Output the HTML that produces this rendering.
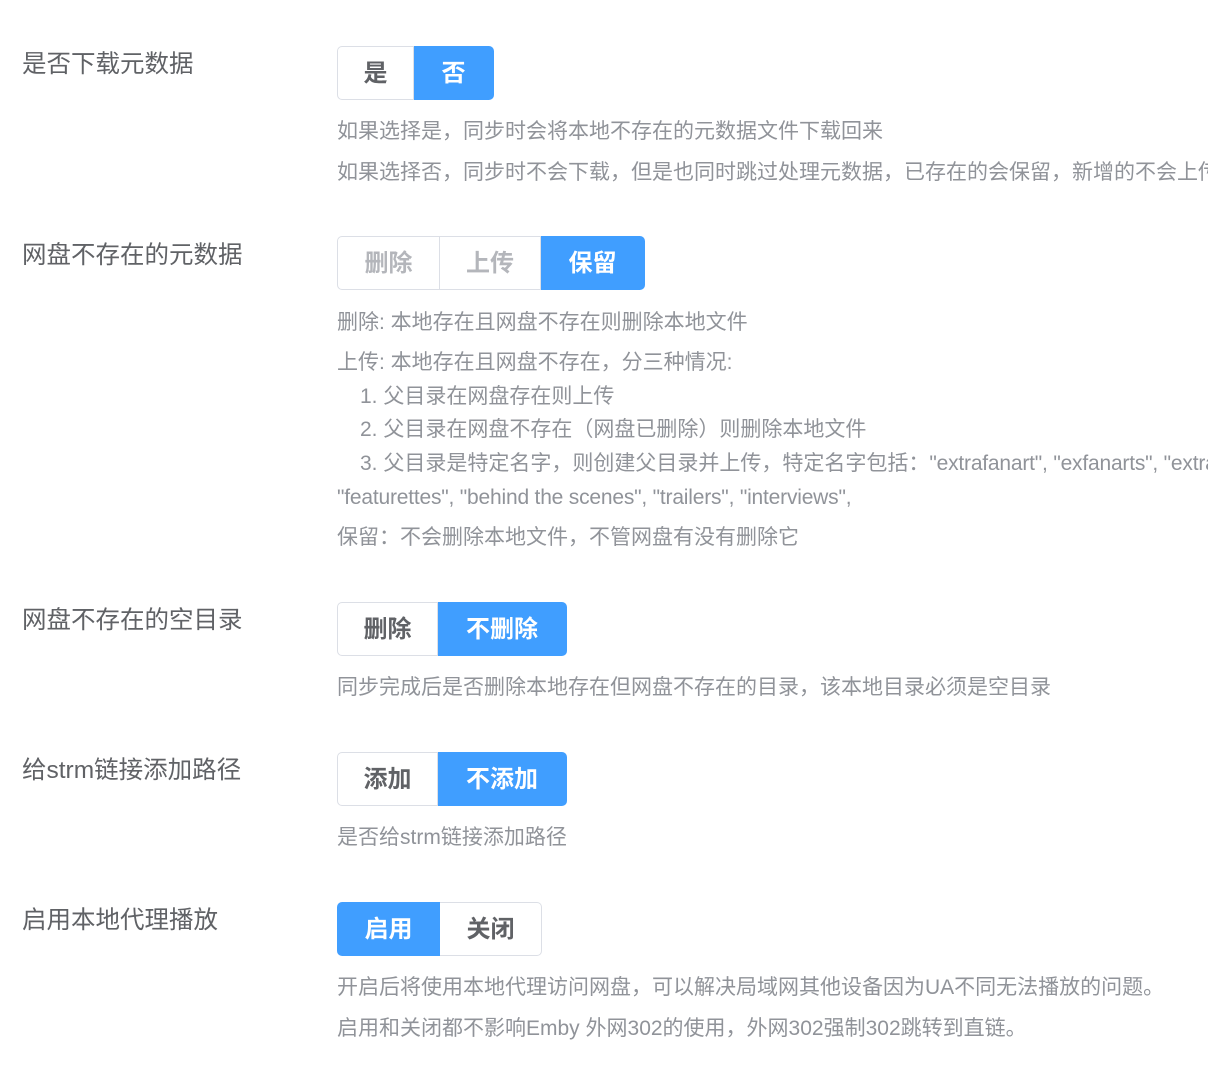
<!DOCTYPE html>
<html><head><meta charset="utf-8"><style>
html,body{margin:0;padding:0;width:1208px;height:1071px;overflow:hidden;background:#fff;position:relative}
body{font-family:"Liberation Sans","Noto Sans CJK SC",sans-serif}
.l{position:absolute;left:22px;font-size:24.5px;color:#606266;white-space:nowrap;line-height:30px}
.d{position:absolute;left:337px;font-size:21px;color:#909399;white-space:nowrap;line-height:28px;letter-spacing:0}
.g{position:absolute;left:337px;height:54px;display:flex;box-sizing:border-box;overflow:hidden;max-width:871px}
.b{height:54px;box-sizing:border-box;border:1px solid #dcdfe6;display:flex;align-items:center;justify-content:center;font-size:24px;font-weight:bold;color:#606266;background:#fff;padding-bottom:5px}
.b+.b{border-left:none}
.b:first-child{border-radius:5px 0 0 5px}
.b:last-child{border-radius:0 5px 5px 0}
.a{background:#409eff;border-color:#409eff;color:#fff}
.dis{color:#b4b6bb}
.e{letter-spacing:-0.2px}
.clip{position:absolute;left:0;top:0;width:1208px;height:1071px;overflow:hidden}
</style></head><body><div class="clip">
<div class="l" style="top:50px">是否下载元数据</div>
<div class="g" style="top:46px"><div class="b" style="width:77px">是</div><div class="b a" style="width:80px">否</div></div>
<div class="d" style="top:118px">如果选择是，同步时会将本地不存在的元数据文件下载回来</div>
<div class="d" style="top:159px">如果选择否，同步时不会下载，但是也同时跳过处理元数据，已存在的会保留，新增的不会上传</div>

<div class="l" style="top:241px">网盘不存在的元数据</div>
<div class="g" style="top:236px"><div class="b dis" style="width:103px">删除</div><div class="b dis" style="width:101px">上传</div><div class="b a" style="width:104px">保留</div></div>
<div class="d" style="top:309px">删除: 本地存在且网盘不存在则删除本地文件</div>
<div class="d" style="top:349px">上传: 本地存在且网盘不存在，分三种情况:</div>
<div class="d" style="top:383px;left:360px">1. 父目录在网盘存在则上传</div>
<div class="d" style="top:416px;left:360px">2. 父目录在网盘不存在（网盘已删除）则删除本地文件</div>
<div class="d" style="top:450px;left:360px">3. 父目录是特定名字，则创建父目录并上传，特定名字包括：<span class="e">"extrafanart", "exfanarts", "extras",</span></div>
<div class="d e" style="top:484px">"featurettes", "behind the scenes", "trailers", "interviews",</div>
<div class="d" style="top:524px">保留：不会删除本地文件，不管网盘有没有删除它</div>

<div class="l" style="top:606px">网盘不存在的空目录</div>
<div class="g" style="top:602px"><div class="b" style="width:101px">删除</div><div class="b a" style="width:129px">不删除</div></div>
<div class="d" style="top:674px">同步完成后是否删除本地存在但网盘不存在的目录，该本地目录必须是空目录</div>

<div class="l" style="top:756px">给strm链接添加路径</div>
<div class="g" style="top:752px"><div class="b" style="width:101px">添加</div><div class="b a" style="width:129px">不添加</div></div>
<div class="d" style="top:824px">是否给strm链接添加路径</div>

<div class="l" style="top:906px">启用本地代理播放</div>
<div class="g" style="top:902px"><div class="b a" style="width:103px">启用</div><div class="b" style="width:102px">关闭</div></div>
<div class="d" style="top:974px">开启后将使用本地代理访问网盘，可以解决局域网其他设备因为UA不同无法播放的问题。</div>
<div class="d" style="top:1015px">启用和关闭都不影响Emby 外网302的使用，外网302强制302跳转到直链。</div>
</div></body></html>
